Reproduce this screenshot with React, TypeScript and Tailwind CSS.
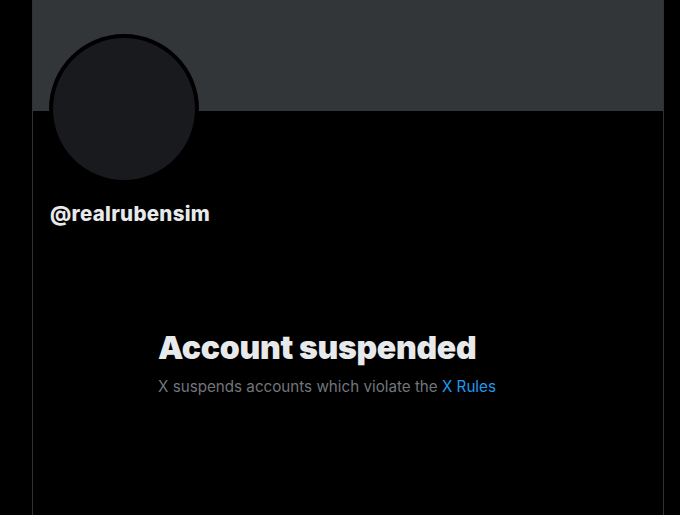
export default function App() {
  return (
    <div className="w-[680px] h-[515px] bg-black overflow-hidden flex" style={{ fontFamily: '"Inter", "Liberation Sans", sans-serif' }}>
      <div className="w-[32px] shrink-0 bg-black" />
      <div className="w-[632px] shrink-0 border-x border-[#2f3336] flex flex-col">
        <div className="h-[111px] bg-[#333639]" />
        <div className="pl-[16px] -mt-[77px]">
          <div className="w-[150px] h-[150px] rounded-full bg-black p-[4px]">
            <div className="w-full h-full rounded-full bg-[#191a1d]" />
          </div>
        </div>
        <div className="pl-[17px] mt-[17px] text-[20.5px] font-extrabold text-[#e7e9ea] leading-[26px] tracking-[0.3px]">@realrubensim</div>
        <div className="pl-[125px] mt-[101px]">
          <div className="text-[32px] font-black text-[#e7e9ea] leading-[40px] tracking-[-0.3px]">Account suspended</div>
          <div className="mt-[9px] text-[15.2px] text-[#71767b] leading-[20px]">
            X suspends accounts which violate the <span className="text-[#1d9bf0]">X Rules</span>
          </div>
        </div>
      </div>
      <div className="flex-1 bg-black" />
    </div>
  );
}
